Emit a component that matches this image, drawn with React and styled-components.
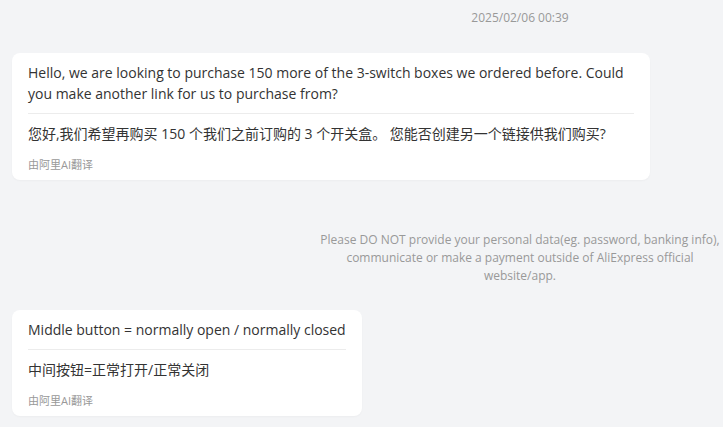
import React from "react";
import styled, { createGlobalStyle } from "styled-components";

const GlobalStyle = createGlobalStyle`
  html, body {
    margin: 0;
    padding: 0;
    background: #f3f4f6;
  }
  body {
    font-family: "Open Sans", "Noto Sans CJK SC", sans-serif;
  }
`;

const messages = [
  {
    id: 1,
    original:
      "Hello, we are looking to purchase 150 more of the 3-switch boxes we ordered before. Could you make another link for us to purchase from?",
    translated:
      "您好,我们希望再购买 150 个我们之前订购的 3 个开关盒。 您能否创建另一个链接供我们购买?",
  },
  {
    id: 2,
    original: "Middle button = normally open / normally closed",
    translated: "中间按钮=正常打开/正常关闭",
  },
];

const App = () => {
  return (
    <>
      <GlobalStyle />
      <ChatPanel>
        <SystemRow>
          <Timestamp>2025/02/06 00:39</Timestamp>
        </SystemRow>
        <BubbleRow $top={27}>
          <Bubble message={messages[0]} />
        </BubbleRow>
        <SystemRow $top={51}>
          <Notice>
            Please DO NOT provide your personal data(eg. password, banking
            info), communicate or make a payment outside of AliExpress official
            website/app.
          </Notice>
        </SystemRow>
        <BubbleRow $top={25}>
          <Bubble message={messages[1]} />
        </BubbleRow>
      </ChatPanel>
    </>
  );
};
export default App;

const Bubble = ({ message }) => (
  <BubbleBox>
    <Original>{message.original}</Original>
    <Divider />
    <Translated>{message.translated}</Translated>
    <Caption>由阿里AI翻译</Caption>
  </BubbleBox>
);

export const ChatPanel = styled.main`
  width: 100%;
  padding: 10px 0 20px;
  display: flex;
  flex-direction: column;
`;

// system messages are centered in the right part of the wide chat panel
export const SystemRow = styled.div`
  display: flex;
  justify-content: center;
  padding-left: 317px;
  margin-top: ${(p) => p.$top || 0}px;
`;

export const Timestamp = styled.span`
  font-size: 12px;
  line-height: 16px;
  color: #999;
`;

export const Notice = styled.p`
  margin: 0;
  max-width: 406px;
  font-size: 12px;
  line-height: 18px;
  color: #999;
  text-align: center;
`;

export const BubbleRow = styled.div`
  display: flex;
  justify-content: flex-start;
  padding-left: 12px;
  margin-top: ${(p) => p.$top || 0}px;
`;

export const BubbleBox = styled.div`
  max-width: 638px;
  box-sizing: border-box;
  background: #fff;
  border-radius: 8px;
  padding: 9px 16px 7px;
  box-shadow: 0 1px 2px rgba(0, 0, 0, 0.03);
`;

export const Original = styled.p`
  margin: 0;
  font-size: 14px;
  line-height: 21px;
  color: #333;
`;

export const Divider = styled.hr`
  border: 0;
  border-top: 1px solid #ececec;
  margin: 9px 0 9px;
`;

export const Translated = styled.p`
  margin: 0;
  font-size: 14px;
  line-height: 21px;
  color: #333;
`;

export const Caption = styled.div`
  margin-top: 13px;
  font-size: 11px;
  line-height: 16px;
  color: #999;
`;
